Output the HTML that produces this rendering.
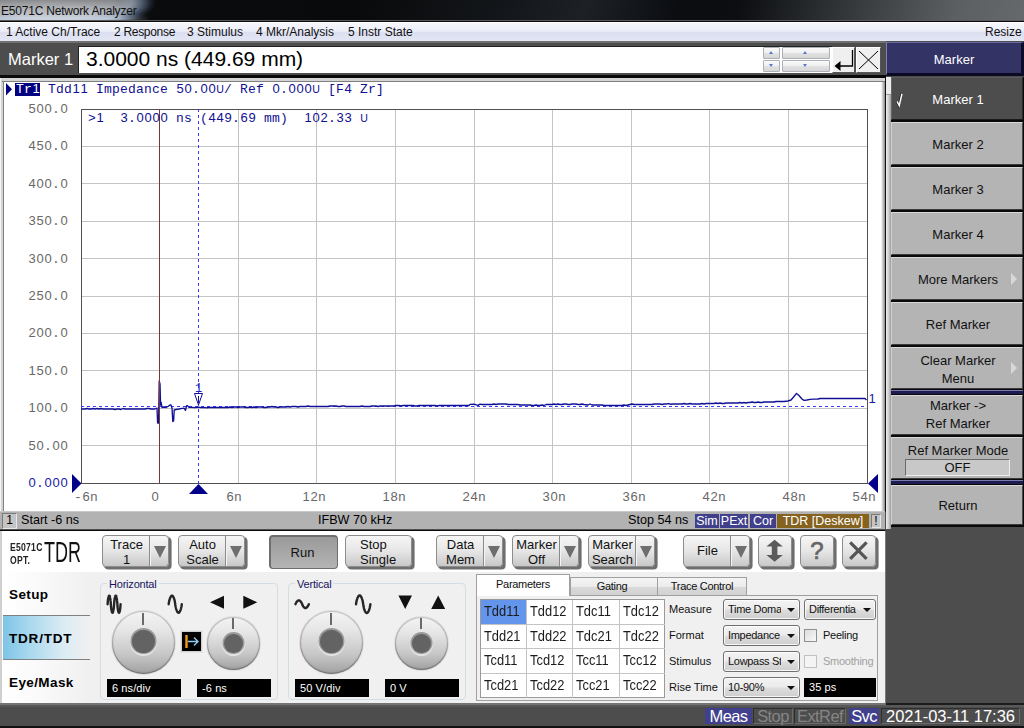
<!DOCTYPE html>
<html><head><meta charset="utf-8"><title>E5071C Network Analyzer</title>
<style>
*{box-sizing:border-box;margin:0;padding:0}
html,body{width:1024px;height:728px;overflow:hidden;background:#4d4d4d;font-family:"Liberation Sans",sans-serif;}
.abs,.abs div,.abs span,.abs i,.abs u,.abs b,.abs svg{position:absolute}
#title{left:0;top:0;width:1024px;height:22px;background:linear-gradient(105deg,#0b0c0e 0,#090a0b 35%,#14171b 50%,#1d2126 57%,#0b0d11 66%,#0c0e12 72%,#3a3d40 84%,#5c5f62 93%,#66696c 100%);overflow:hidden;border-bottom:1px solid #0a0a0a}
#title:after{content:"";position:absolute;left:0;top:20px;width:1024px;height:1px;background:#5a5a5a}
#title .glow{left:-50px;top:-30px;width:206px;height:64px;background:radial-gradient(ellipse closest-side at 50% 50%,rgba(200,203,208,1) 0%,rgba(190,194,200,.97) 55%,rgba(175,188,206,.85) 76%,rgba(130,160,200,.45) 88%,rgba(120,150,190,.15) 95%,rgba(120,150,190,0) 100%);}
#title .g2{left:0;top:0;width:150px;height:22px;background:linear-gradient(rgba(90,90,90,.55) 0,rgba(120,120,120,.25) 35%,rgba(255,255,255,0) 60%,rgba(225,238,255,.5) 85%,rgba(225,238,255,.2) 100%);-webkit-mask-image:linear-gradient(90deg,#000 0,#000 80%,transparent 100%)}
#title .txt{left:1px;top:4px;font-size:12px;letter-spacing:-.2px;color:#111;white-space:nowrap}
#menu{left:0;top:22px;width:1024px;height:19px;background:linear-gradient(#f6f7fc 0,#eceef8 45%,#dcdff0 52%,#e3e6f4 100%);border-top:1px solid #fff;font-size:12px;color:#111}
#menu span{top:2px;white-space:nowrap}
#mbar{left:0;top:41px;width:886px;height:37px;background:#4d4d4d;border-top:2px solid #707070;border-bottom:3px solid #0a0a0a}
#mbar .lbl{left:8px;top:7px;color:#fff;font-size:16.5px;white-space:nowrap}
#mbar .entry{left:78px;top:3px;width:754px;height:27px;background:#fff;border-top:1px solid #222;border-left:1px solid #222}
#mbar .val{left:86px;top:4px;font-size:21px;color:#000;white-space:nowrap}
.spin{background:linear-gradient(#fafafa 0,#f0f0f0 45%,#e2e2e2 50%,#d6d6d6 100%);border:1px solid #aeb0b8;border-radius:1px}
.spin i{left:50%;top:50%;margin:-2px 0 0 -3px;width:0;height:0;border-left:2.5px solid transparent;border-right:2.5px solid transparent}
.spin i.u{border-bottom:3px solid #5876d6}
.spin i.d{border-top:3px solid #5876d6}
.mb{background:#efefef;border:1px solid;border-color:#fff #555 #555 #fff}
#stat{font-size:12.6px;color:#000;border-top:1px solid #c8c8c8;border-bottom:1px solid #505050}
#stat span{top:1px;white-space:nowrap}
.sb1{background:#c4c4c4;border:1px solid;border-color:#7a7a7a #e8e8e8 #e8e8e8 #7a7a7a;text-align:center;font-size:12px;line-height:13px;color:#000}
.sbx{top:2px;height:14px;color:#fff;text-align:center;font-size:12.5px;line-height:14px;white-space:nowrap}
.nv{background:#3f3f8c}
.br{background:#86621f}
/* right panel */
#rp{left:886px;top:41px;width:138px;height:687px;background:#4d4d4d}
#rp .hd{left:0;top:1px;width:138px;height:34px;background:#333366;border:1px solid;border-color:#6a6aa0 #0c0c2a #0a0a22 #8080b8;border-bottom-width:3px;border-right-width:3px;color:#fff;text-align:center;font-size:13px;line-height:34px}
.sk{left:5px;width:132px;height:43px;background:#b4b4b4;border:1px solid;border-color:#d8d8d8 #4a4a4a #3a3a3a #d0d0d0;color:#111;text-align:center;font-size:13px;line-height:18px;display:flex;align-items:center;justify-content:center;position:absolute;padding-left:2px;padding-top:2px}
.sk.on{background:#4d4d4d;color:#fff;border-color:#5a5a5a #2a2a2a #1a1a1a #666}
.sk b{position:absolute;right:5px;top:50%;margin-top:-6px;width:0;height:0;border-top:6px solid transparent;border-bottom:6px solid transparent;border-left:6px solid #d8d8d8}
.sep{left:5px;width:132px;height:4px;background:#1c1c50;border-top:1px solid #7a7ab0;position:absolute}
/* TDR panel */
#tdr{left:0;top:0;width:0;height:0;font-size:13px;color:#111}
#tdr .bg{left:0;top:530px;width:886px;height:173px;background:#d0d0d0;border-top:1px solid #0a0a0a;border-right:1px solid #7a7a7a}
#tdr .wh{left:2px;top:531px;width:883px;height:41px;background:#fff}
#tdr .gy{left:2px;top:572px;width:883px;height:131px;background:#f0f0f0}
#tdr .side{left:2px;top:572px;width:88px;height:131px;background:linear-gradient(90deg,#fff 0,#fafafa 40%,#f0f0f0 100%)}
#tdr .sel{left:3px;top:615px;width:87px;height:45px;background:linear-gradient(90deg,#7cc4e6 0,#a8d8ee 30%,#dcecf4 70%,#f0f0f0 100%);border-top:1px solid #808080;border-bottom:1px solid #808080}
#tdr .sl{left:9px;font-weight:bold;font-size:13.5px;letter-spacing:.4px;white-space:nowrap;color:#000}
.tb{height:32px;border:1px solid #8c8c8c;border-radius:4px;background:linear-gradient(#f6f6f6 0,#e6e6e6 50%,#c8c8c8 100%);box-shadow:1px 1px 0 #6e6e6e,2px 2px 0 #6e6e6e,2.6px 2.6px 0 #707070;text-align:center;line-height:14.5px;font-size:13px;padding-top:2px;top:535px;color:#111}
.tb.one{line-height:26px}
.tb .tx{left:0;top:2px;text-align:center}
.tb .dv{top:0;width:2px;height:30px;border-left:1px solid #8a8a8a;border-right:1px solid #f4f4f4}
.tb .ar{top:10px;width:0;height:0;border-left:6px solid transparent;border-right:6px solid transparent;border-top:12.5px solid #6e6e6e}
.tb.dn{background:linear-gradient(#9a9a9a 0,#b4b4b4 100%);border:2px solid #6e6e6e;border-right-width:1px;border-bottom-width:1px;box-shadow:none;height:34px;line-height:27px;padding-right:3px}
.gb{top:583px;height:117px;border:1px solid #d3dde4;border-radius:4px}
.gl{top:576.5px;font-size:11px;letter-spacing:-.2px;color:#151560;background:#f0f0f0;padding:0 2px;white-space:nowrap;line-height:15px}
.kb{border-radius:50%;background:linear-gradient(#f4f4f4 0,#e6e6e6 30%,#c6c6c6 70%,#a0a0a0 100%);box-shadow:inset 0 -1px 1.5px rgba(70,70,70,.55),inset 0 0 0 1px rgba(140,140,140,.45),0 0 0 1px rgba(205,205,205,.55)}
.kb i{border-radius:50%;background:#636363;box-shadow:0 -.5px 0 1.5px #9a9a9a,0 1px 0 2px #e2e2e2}
.kb u{background:#6a6a6a;width:2px;left:50%;margin-left:-1.500px}
.bx{background:#000;color:#fff;font-size:11px;letter-spacing:.1px;line-height:18px;height:18px;padding-left:5px;white-space:nowrap;top:679px}
.tab{border:1px solid #a0a0a0;border-bottom:none;background:linear-gradient(#f4f4f4 0,#ececec 50%,#dadada 51%,#d2d2d2 100%);text-align:center;font-size:11px;letter-spacing:-.3px;line-height:16px;top:577px;height:18px}
.tab.act{background:#fff;top:574px;height:22px;line-height:19px;z-index:2}
.tp{left:476px;top:595px;width:402px;height:106px;border:1px solid #a0a0a0;background:#f0f0f0}
.pt{left:480px;top:599px;width:185px;height:99px;background:#fff;border:1px solid #9a9a9a}
.pt div{width:46px;height:24px;font-size:14px;line-height:22px;padding-left:3px;white-space:nowrap;color:#1c1c1c}
.pt span{display:inline-block;position:static!important;transform:scaleX(.92);transform-origin:0 50%}
.cl{left:669px;font-size:11px;white-space:nowrap;line-height:15px}
.cb{height:21px;border:1px solid #707070;border-radius:3px;background:linear-gradient(#f3f3f3 0,#ebebeb 48%,#dddddd 52%,#cfcfcf 100%);box-shadow:inset 0 0 0 1px rgba(255,255,255,.8);font-size:11px;line-height:19px;padding-left:4px;white-space:nowrap;overflow:hidden;color:#111}
.cb:after{content:"";position:absolute;right:4px;top:8px;border-left:4px solid transparent;border-right:4px solid transparent;border-top:4px solid #111}
.cb span{left:4px;top:0;overflow:hidden;height:19px;letter-spacing:-.3px}
.ck{width:13px;height:13px;border:1px solid #8e8f8f;background:linear-gradient(135deg,#dcdcdc,#f8f8f8)}
#bot{left:0;top:703px;width:1024px;height:25px;background:#4d4d4d;border-top:2px solid #747474;border-bottom:2px solid #111}
#bot .rl{left:886px;top:-2px;width:138px;height:2px;background:#1c1c1c;border:0}
#bot:after{content:"";position:absolute;left:0;top:0;width:1024px;height:2px;background:#585858}
#bot div{top:3px;height:16px;font-size:16.5px;line-height:16px;text-align:center;white-space:nowrap;color:#fff;letter-spacing:-.6px}
#bot .n{background:#40408c}
#bot .o{color:#858585;border:1px solid;border-color:#2e2e2e #6a6a6a #6a6a6a #2e2e2e;line-height:14px}
</style></head><body>
<div id="title" class="abs"><div class="glow"></div><div class="g2"></div><div class="txt">E5071C Network Analyzer</div></div>
<div id="menu" class="abs"><span style="left:6px">1 Active Ch/Trace</span><span style="left:114px;letter-spacing:-.3px">2 Response</span><span style="left:187px">3 Stimulus</span><span style="left:256px">4 Mkr/Analysis</span><span style="left:348px">5 Instr State</span><span style="left:985px">Resize</span></div>
<div id="mbar" class="abs"><div class="lbl">Marker 1</div><div class="entry"></div><div class="val">3.0000 ns (449.69 mm)</div>
<div class="abs spin" style="left:763px;top:4px;width:17px;height:12px"><i class="u"></i></div>
<div class="abs spin" style="left:763px;top:17px;width:17px;height:12px"><i class="d"></i></div>
<div class="abs spin" style="left:782px;top:4px;width:48px;height:12px"><i class="u"></i></div>
<div class="abs spin" style="left:782px;top:17px;width:48px;height:12px"><i class="d"></i></div>
<div class="abs mb" style="left:832px;top:4px;width:23px;height:26px"><svg width="23" height="26" style="left:-1px;top:-1px"><path d="M20.5 3v16H7" fill="none" stroke="#000" stroke-width="1.3"/><path d="M2.5 19l6-5v10z" fill="#000"/></svg></div>
<div class="abs mb" style="left:856px;top:4px;width:25px;height:26px"><svg width="25" height="26" style="left:-1px;top:-1px"><path d="M3 4l19 18M22 4L3 22" fill="none" stroke="#000" stroke-width="1"/></svg></div>
</div>
<div id="graph" class="abs" style="left:0;top:78px;width:886px;height:434px">
<svg width="886" height="434" viewBox="0 78 886 434" shape-rendering="auto" font-family="Liberation Mono, monospace" font-size="13" letter-spacing=".2">
<rect x="0" y="78" width="886" height="434" fill="#fff"/>
<rect x="0" y="78" width="885" height="3" fill="#d4d4d4"/><rect x="0" y="78" width="3" height="434" fill="#d4d4d4"/>
<rect x="2" y="81" width="883" height="1" fill="#808080"/><rect x="3" y="81" width="1" height="431" fill="#808080"/>
<rect x="0" y="78" width="1" height="434" fill="#f4f4f4"/>
<rect x="881" y="82" width="4" height="430" fill="url(#rb)"/><rect x="885" y="78" width="1" height="434" fill="#111"/>
<defs><linearGradient id="rb" x1="0" x2="1" y1="0" y2="0"><stop offset="0" stop-color="#fff"/><stop offset=".4" stop-color="#d0d0d0"/><stop offset="1" stop-color="#8a8a8a"/></linearGradient></defs>
<path d="M6 83v12.5l6-6.25z" fill="#00008b"/>
<rect x="15" y="83" width="25" height="13" fill="#000080"/>
<text y="92.6" fill="#fff" letter-spacing="0" ><tspan x="16.1 24.1">Tr</tspan><tspan x="32.4" font-family="Liberation Sans, sans-serif">1</tspan></text>
<text y="92.6" fill="#101090" letter-spacing="0" ><tspan x="48.1 56.1 64.1">Tdd</tspan><tspan x="72.4 80.4" font-family="Liberation Sans, sans-serif">11</tspan> <tspan x="96.1 104.1 112.1 120.1 128.1 136.1 144.1 152.1 160.1">Impedance</tspan> <tspan x="176.4 184.4" font-family="Liberation Sans, sans-serif">50</tspan><tspan x="192.1">.</tspan><tspan x="200.4 208.4" font-family="Liberation Sans, sans-serif">00</tspan><tspan x="216.2" font-size="10.600" font-family="Liberation Sans, sans-serif">U</tspan><tspan x="224.1">/</tspan> <tspan x="240.1 248.1 256.1">Ref</tspan> <tspan x="272.4" font-family="Liberation Sans, sans-serif">0</tspan><tspan x="280.1">.</tspan><tspan x="288.4 296.4 304.4" font-family="Liberation Sans, sans-serif">000</tspan><tspan x="312.2" font-size="10.600" font-family="Liberation Sans, sans-serif">U</tspan> <tspan x="328.1 336.1">[F</tspan><tspan x="344.4" font-family="Liberation Sans, sans-serif">4</tspan> <tspan x="360.1 368.1 376.1">Zr]</tspan></text>
<path d="M159.5 109V483M238.5 109V483M316.5 109V483M395.5 109V483M474.5 109V483M552.5 109V483M631.5 109V483M709.5 109V483M788.5 109V483M81 146.5H867M81 183.5H867M81 221.5H867M81 258.5H867M81 296.5H867M81 333.5H867M81 370.5H867M81 408.5H867M81 445.5H867" stroke="#c4c4c4" stroke-width="1" fill="none" shape-rendering="crispEdges"/>
<rect x="81.5" y="109.5" width="786" height="374" fill="none" stroke="#505050" stroke-width="1" shape-rendering="crispEdges"/>
<text y="113.0" fill="#686868" letter-spacing="0" ><tspan x="28.4 36.4 44.4" font-family="Liberation Sans, sans-serif">500</tspan><tspan x="52.1">.</tspan><tspan x="60.4" font-family="Liberation Sans, sans-serif">0</tspan></text>
<text y="150.4" fill="#686868" letter-spacing="0" ><tspan x="28.4 36.4 44.4" font-family="Liberation Sans, sans-serif">450</tspan><tspan x="52.1">.</tspan><tspan x="60.4" font-family="Liberation Sans, sans-serif">0</tspan></text>
<text y="187.8" fill="#686868" letter-spacing="0" ><tspan x="28.4 36.4 44.4" font-family="Liberation Sans, sans-serif">400</tspan><tspan x="52.1">.</tspan><tspan x="60.4" font-family="Liberation Sans, sans-serif">0</tspan></text>
<text y="225.2" fill="#686868" letter-spacing="0" ><tspan x="28.4 36.4 44.4" font-family="Liberation Sans, sans-serif">350</tspan><tspan x="52.1">.</tspan><tspan x="60.4" font-family="Liberation Sans, sans-serif">0</tspan></text>
<text y="262.6" fill="#686868" letter-spacing="0" ><tspan x="28.4 36.4 44.4" font-family="Liberation Sans, sans-serif">300</tspan><tspan x="52.1">.</tspan><tspan x="60.4" font-family="Liberation Sans, sans-serif">0</tspan></text>
<text y="300.0" fill="#686868" letter-spacing="0" ><tspan x="28.4 36.4 44.4" font-family="Liberation Sans, sans-serif">250</tspan><tspan x="52.1">.</tspan><tspan x="60.4" font-family="Liberation Sans, sans-serif">0</tspan></text>
<text y="337.4" fill="#686868" letter-spacing="0" ><tspan x="28.4 36.4 44.4" font-family="Liberation Sans, sans-serif">200</tspan><tspan x="52.1">.</tspan><tspan x="60.4" font-family="Liberation Sans, sans-serif">0</tspan></text>
<text y="374.8" fill="#686868" letter-spacing="0" ><tspan x="28.4 36.4 44.4" font-family="Liberation Sans, sans-serif">150</tspan><tspan x="52.1">.</tspan><tspan x="60.4" font-family="Liberation Sans, sans-serif">0</tspan></text>
<text y="412.2" fill="#686868" letter-spacing="0" ><tspan x="28.4 36.4 44.4" font-family="Liberation Sans, sans-serif">100</tspan><tspan x="52.1">.</tspan><tspan x="60.4" font-family="Liberation Sans, sans-serif">0</tspan></text>
<text y="449.6" fill="#686868" letter-spacing="0" ><tspan x="28.4 36.4" font-family="Liberation Sans, sans-serif">50</tspan><tspan x="44.1">.</tspan><tspan x="52.4 60.4" font-family="Liberation Sans, sans-serif">00</tspan></text>
<text y="487.0" fill="#1a1aa0" letter-spacing="0" ><tspan x="28.4" font-family="Liberation Sans, sans-serif">0</tspan><tspan x="36.1">.</tspan><tspan x="44.4 52.4 60.4" font-family="Liberation Sans, sans-serif">000</tspan></text>
<text y="501" fill="#686868" letter-spacing="0" ><tspan x="74.1">-</tspan><tspan x="82.4" font-family="Liberation Sans, sans-serif">6</tspan><tspan x="90.1">n</tspan></text>
<text y="501" fill="#686868" letter-spacing="0" ><tspan x="151.4" font-family="Liberation Sans, sans-serif">0</tspan></text>
<text y="501" fill="#686868" letter-spacing="0" ><tspan x="226.4" font-family="Liberation Sans, sans-serif">6</tspan><tspan x="234.1">n</tspan></text>
<text y="501" fill="#686868" letter-spacing="0" ><tspan x="302.4 310.4" font-family="Liberation Sans, sans-serif">12</tspan><tspan x="318.1">n</tspan></text>
<text y="501" fill="#686868" letter-spacing="0" ><tspan x="382.4 390.4" font-family="Liberation Sans, sans-serif">18</tspan><tspan x="398.1">n</tspan></text>
<text y="501" fill="#686868" letter-spacing="0" ><tspan x="462.4 470.4" font-family="Liberation Sans, sans-serif">24</tspan><tspan x="478.1">n</tspan></text>
<text y="501" fill="#686868" letter-spacing="0" ><tspan x="542.4 550.4" font-family="Liberation Sans, sans-serif">30</tspan><tspan x="558.1">n</tspan></text>
<text y="501" fill="#686868" letter-spacing="0" ><tspan x="622.4 630.4" font-family="Liberation Sans, sans-serif">36</tspan><tspan x="638.1">n</tspan></text>
<text y="501" fill="#686868" letter-spacing="0" ><tspan x="702.4 710.4" font-family="Liberation Sans, sans-serif">42</tspan><tspan x="718.1">n</tspan></text>
<text y="501" fill="#686868" letter-spacing="0" ><tspan x="782.4 790.4" font-family="Liberation Sans, sans-serif">48</tspan><tspan x="798.1">n</tspan></text>
<text y="501" fill="#686868" letter-spacing="0" ><tspan x="852.4 860.4" font-family="Liberation Sans, sans-serif">54</tspan><tspan x="868.1">n</tspan></text>
<path d="M198.5 109V484" stroke="#3a3aff" stroke-width="1" stroke-dasharray="3 3" shape-rendering="crispEdges"/>
<path d="M81 406.5H867" stroke="#3a3aff" stroke-width="1" stroke-dasharray="3 3" shape-rendering="crispEdges"/>
<path d="M81.0 409.0 83.0 409.0 85.0 409.0 87.0 408.5 89.0 409.0 91.0 409.0 93.0 408.5 95.0 409.0 97.0 408.5 99.0 409.0 101.0 408.5 103.0 409.0 105.0 409.0 107.0 409.0 109.0 409.0 111.0 409.0 113.0 409.0 115.0 409.5 117.0 409.0 119.0 409.0 121.0 409.5 123.0 408.5 125.0 409.0 127.0 409.0 129.0 409.0 131.0 409.0 133.0 409.0 135.0 409.0 137.0 409.0 139.0 409.0 141.0 409.0 143.0 409.0 145.0 409.0 147.0 408.5 149.0 408.5 151.0 409.0 153.0 409.0 155.0 409.0 157.0 408.0 157.6 423.0 158.6 423.0 159.2 381.0 160.0 384.0 160.6 405.0 161.2 402.5 162.0 407.5 164.0 407.0 166.0 407.5 168.0 406.5 170.0 405.0 171.0 405.0 172.0 408.0 172.8 421.5 173.6 421.0 174.2 410.0 176.0 409.5 179.0 409.0 182.0 408.4 184.0 408.2 185.5 410.4 186.5 406.0 187.5 405.6 189.0 407.4 192.0 407.4 195.0 407.6 198.5 407.2 201.0 407.6 204.0 407.4 207.0 407.8 208.0 407.5 210.0 407.5 212.0 407.5 214.0 407.5 216.0 407.5 218.0 407.5 220.0 407.5 222.0 407.5 224.0 407.5 226.0 407.5 228.0 407.5 230.0 407.0 232.0 407.5 234.0 407.0 236.0 407.0 238.0 407.5 240.0 407.0 242.0 407.0 244.0 407.0 246.0 407.5 248.0 407.5 250.0 407.0 252.0 407.5 254.0 407.0 256.0 407.5 258.0 407.0 260.0 407.0 262.0 407.0 264.0 407.5 266.0 407.5 268.0 407.0 270.0 407.0 272.0 406.5 274.0 407.0 276.0 407.0 278.0 407.5 280.0 407.0 282.0 407.0 284.0 407.0 286.0 407.0 288.0 406.5 290.0 407.0 292.0 406.5 294.0 406.5 296.0 406.5 298.0 407.0 300.0 406.5 302.0 406.5 304.0 406.5 306.0 406.5 308.0 406.0 310.0 406.5 312.0 406.5 314.0 406.5 316.0 406.5 318.0 406.5 320.0 406.5 322.0 406.5 324.0 406.5 326.0 406.5 328.0 406.5 330.0 406.0 332.0 406.0 334.0 406.0 336.0 406.0 338.0 406.5 340.0 406.5 342.0 406.0 344.0 406.0 346.0 406.5 348.0 406.5 350.0 406.5 352.0 406.5 354.0 406.5 356.0 406.5 358.0 406.5 360.0 406.5 362.0 406.0 364.0 406.5 366.0 406.5 368.0 406.5 370.0 406.5 372.0 406.0 374.0 406.0 376.0 406.0 378.0 406.5 380.0 406.0 382.0 406.0 384.0 406.0 386.0 406.0 388.0 406.0 390.0 406.0 392.0 406.0 394.0 406.0 395.0 405.5 397.0 405.5 399.0 405.5 401.0 406.0 403.0 405.5 405.0 405.5 407.0 405.5 409.0 405.5 411.0 405.5 413.0 405.5 415.0 406.0 417.0 406.0 419.0 405.5 421.0 405.5 423.0 405.5 425.0 405.5 427.0 405.5 429.0 405.5 431.0 405.5 433.0 405.5 435.0 405.5 437.0 406.0 439.0 405.5 441.0 405.5 443.0 405.5 445.0 405.5 447.0 405.5 449.0 405.5 451.0 405.5 453.0 405.5 455.0 405.5 457.0 405.5 459.0 405.5 461.0 405.5 463.0 405.5 465.0 405.5 467.0 405.5 469.0 405.5 470.0 404.4 474.0 404.2 478.0 405.4 480.0 404.2 482.0 404.5 484.0 404.5 486.0 404.5 488.0 404.5 490.0 404.5 492.0 404.5 494.0 404.0 496.0 404.5 498.0 404.0 500.0 404.0 502.0 404.0 504.0 404.0 506.0 404.0 508.0 404.5 510.0 404.5 512.0 404.5 514.0 404.5 516.0 404.5 518.0 404.5 520.0 405.0 522.0 405.0 524.0 405.0 526.0 405.0 528.0 405.0 530.0 405.0 532.0 405.5 534.0 405.5 536.0 405.0 538.0 405.5 540.0 405.5 542.0 405.0 544.0 405.5 546.0 404.5 548.0 404.5 550.0 404.5 552.0 404.5 554.0 404.0 556.0 404.5 558.0 404.0 560.0 404.5 562.0 404.5 564.0 404.0 566.0 404.0 568.0 404.5 570.0 404.5 572.0 404.0 574.0 404.0 576.0 404.0 578.0 404.5 580.0 404.5 582.0 404.0 584.0 404.5 588.0 405.0 590.0 404.0 592.0 405.0 594.0 405.0 596.0 405.0 598.0 405.0 600.0 405.0 602.0 405.0 604.0 405.5 606.0 405.5 608.0 405.5 610.0 405.5 612.0 405.5 614.0 405.5 616.0 405.5 618.0 405.5 620.0 405.5 622.0 405.5 624.0 405.0 626.0 405.5 628.0 405.0 630.0 404.5 632.0 404.0 634.0 404.5 636.0 404.5 638.0 404.5 640.0 404.5 642.0 404.5 644.0 404.5 646.0 404.5 648.0 404.5 650.0 404.5 652.0 404.5 654.0 404.0 656.0 404.0 658.0 404.0 660.0 404.0 662.0 404.5 664.0 404.0 666.0 404.0 669.0 403.6 671.0 404.4 672.0 404.0 674.0 404.0 676.0 404.0 678.0 404.0 680.0 404.0 682.0 404.0 684.0 403.5 686.0 404.0 688.0 404.0 690.0 403.5 692.0 404.0 694.0 404.0 696.0 404.0 698.0 404.0 700.0 404.0 702.0 403.5 704.0 404.0 706.0 403.5 708.0 403.5 710.0 403.5 712.0 403.5 714.0 403.5 716.0 403.0 718.0 403.5 720.0 403.0 722.0 403.5 724.0 403.5 726.0 403.0 728.0 403.0 730.0 403.0 732.0 403.0 734.0 403.0 736.0 403.0 738.0 403.0 740.0 402.5 742.0 403.0 744.0 402.5 746.0 403.0 748.0 402.5 750.0 402.5 752.0 402.0 754.0 402.5 756.0 402.5 758.0 402.0 760.0 402.5 762.0 402.5 764.0 402.0 766.0 402.0 768.0 402.0 770.0 402.0 772.0 402.0 774.0 402.0 776.0 401.5 778.0 401.5 780.0 401.5 782.0 401.5 784.0 401.5 788.0 401.0 791.0 400.0 794.0 396.5 796.5 393.4 799.0 395.5 802.0 399.0 804.0 400.4 807.0 400.0 810.0 399.4 814.0 399.2 818.0 399.0 820.0 398.5 823.0 398.5 826.0 398.5 829.0 398.5 832.0 398.5 835.0 398.5 838.0 398.5 841.0 398.5 844.0 398.5 847.0 398.5 850.0 398.5 853.0 398.5 856.0 398.5 859.0 398.5 862.0 398.5 865.0 398.5 866.5 400.0" fill="none" stroke="#101096" stroke-width="1.35" stroke-linejoin="round"/>
<path d="M159.5 109V483" stroke="#7a3535" stroke-width="1" shape-rendering="crispEdges"/>
<path d="M194.5 393.5h8l-4 11.5z" fill="#fff" stroke="#101096" stroke-width="1"/>
<path d="M198.5 396v7" stroke="#101096" stroke-width="1"/>
<text x="198.6" y="391.5" text-anchor="middle" fill="#2020c0" font-size="12">1</text>
<text y="402.5" fill="#1a1aa0" letter-spacing="0" ><tspan x="868.4" font-family="Liberation Sans, sans-serif">1</tspan></text>
<path d="M198.5 484l-9.5 10h19z" fill="#00008b"/>
<path d="M72 474v19l9.5-9.5z" fill="#00008b"/>
<path d="M878 474v19l-10-9.5z" fill="#00008b"/>
<text y="122" fill="#101090" letter-spacing="0" ><tspan x="88.1">&gt;</tspan><tspan x="96.4" font-family="Liberation Sans, sans-serif">1</tspan>  <tspan x="120.4" font-family="Liberation Sans, sans-serif">3</tspan><tspan x="128.1">.</tspan><tspan x="136.4 144.4 152.4 160.4" font-family="Liberation Sans, sans-serif">0000</tspan> <tspan x="176.1 184.1">ns</tspan> <tspan x="200.1">(</tspan><tspan x="208.4 216.4 224.4" font-family="Liberation Sans, sans-serif">449</tspan><tspan x="232.1">.</tspan><tspan x="240.4 248.4" font-family="Liberation Sans, sans-serif">69</tspan> <tspan x="264.1 272.1 280.1">mm)</tspan>  <tspan x="304.4 312.4 320.4" font-family="Liberation Sans, sans-serif">102</tspan><tspan x="328.1">.</tspan><tspan x="336.4 344.4" font-family="Liberation Sans, sans-serif">33</tspan> <tspan x="360.2" font-size="10.600" font-family="Liberation Sans, sans-serif">U</tspan></text>
</svg></div>
<div id="stat" class="abs" style="left:0;top:511px;width:885px;height:19px;background:#b2b2b2">
<div class="sb1" style="left:2px;top:1px;width:15px;height:16px">1</div>
<span style="left:21px">Start -6 ns</span><span style="left:318px">IFBW 70 kHz</span><span style="left:628px">Stop 54 ns</span>
<div class="sbx nv" style="left:695px;width:24px">Sim</div><div class="sbx nv" style="left:720px;width:28px">PExt</div><div class="sbx nv" style="left:750px;width:26px">Cor</div><div class="sbx br" style="left:777px;width:92px">TDR [Deskew]</div><div class="sb1" style="left:871px;top:2px;width:10px;height:14px">!</div>
</div>
<div id="rp" class="abs">
<div class="hd">Marker</div>
<div style="left:5px;top:36px;width:133px;height:450px;background:#0a0a0a"></div>
<div style="left:0;top:36px;width:5px;height:452px;background:linear-gradient(90deg,#f0f0f0,#c8c8c8 60%,#9a9a9a)"></div>
<div style="left:0;top:36px;width:5px;height:18px;background:#ececec;border-bottom:1px solid #999"></div>
<div class="sk on" style="top:36px">Marker 1<svg width="9" height="15" style="position:absolute;left:4px;top:15px"><path d="M.3 8.200l2.300 4.600L5.300.800" fill="none" stroke="#111" stroke-width="1.600"/><path d="M1 8.400l2.200 4.200L5.900.800" fill="none" stroke="#fff" stroke-width="1.500"/></svg></div>
<div class="sk" style="top:81px">Marker 2</div>
<div class="sk" style="top:126px">Marker 3</div>
<div class="sk" style="top:171px">Marker 4</div>
<div class="sk" style="top:216px">More Markers<b></b></div>
<div class="sk" style="top:261px">Ref Marker</div>
<div class="sk" style="top:306px;height:42px;padding-top:4px">Clear Marker<br>Menu<b></b></div>
<div class="sep" style="top:349px"></div>
<div class="sk" style="top:354px;height:40px;padding-top:0">Marker -&gt;<br>Ref Marker</div>
<div class="sk" style="top:396px;height:42px;align-items:flex-start;line-height:21px;padding-top:2px">Ref Marker Mode<div style="position:absolute;left:13px;top:21px;width:105px;height:17px;border:1px solid;border-color:#6a6a6a #eee #eee #6a6a6a;background:#c8c8c8;line-height:15px;font-size:13px">OFF</div></div>
<div class="sep" style="top:439px"></div>
<div class="sk" style="top:444px;height:40px">Return</div>
</div>
<div id="tdr" class="abs">
<div class="bg"></div><div class="wh"></div><div class="gy"></div><div class="side"></div><div class="sel"></div>
<div style="left:10px;top:541px;font-size:10.5px;font-weight:bold;line-height:12.5px;color:#222;transform:scaleX(.82);transform-origin:0 0;white-space:nowrap;letter-spacing:.3px">E5071C<br>OPT.</div>
<div style="left:44px;top:535px;font-size:30px;line-height:34px;color:#111;transform:scaleX(.6);transform-origin:0 0;white-space:nowrap">TDR</div>
<div class="sl" style="top:587px">Setup</div><div class="sl" style="top:630.5px;letter-spacing:.8px">TDR/TDT</div><div class="sl" style="top:675px">Eye/Mask</div>
<!-- toolbar -->
<div class="tb" style="left:102px;width:67px"><div class="tx" style="width:47px">Trace<br>1</div><div class="dv" style="left:46px"></div><div class="ar" style="left:51px"></div></div>
<div class="tb" style="left:178px;width:67px"><div class="tx" style="width:47px">Auto<br>Scale</div><div class="dv" style="left:46px"></div><div class="ar" style="left:51px"></div></div>
<div class="tb dn" style="left:269px;width:69px">Run</div>
<div class="tb" style="left:345px;width:67px"><div class="tx" style="width:65px;text-align:left;padding-left:14px">Stop<br>Single</div></div>
<div class="tb" style="left:436px;width:67px"><div class="tx" style="width:47px">Data<br>Mem</div><div class="dv" style="left:46px"></div><div class="ar" style="left:51px"></div></div>
<div class="tb" style="left:512px;width:67px"><div class="tx" style="width:47px">Marker<br>Off</div><div class="dv" style="left:46px"></div><div class="ar" style="left:51px"></div></div>
<div class="tb" style="left:588px;width:67px"><div class="tx" style="width:47px">Marker<br>Search</div><div class="dv" style="left:46px"></div><div class="ar" style="left:51px"></div></div>
<div class="tb one" style="left:683px;width:67px"><div class="tx" style="width:47px">File</div><div class="dv" style="left:46px"></div><div class="ar" style="left:51px"></div></div>
<div class="tb" style="left:758px;width:34px"><svg width="32" height="30" style="left:0;top:0"><path d="M15.600 3.800l8.200 6.800h-5.400v8.400h5.400l-8.200 6.800-8.200-6.800h5.400v-8.400h-5.400z" fill="#5a5a5a"/></svg></div>
<div class="tb one" style="left:800px;width:34px;font-size:24px;color:#666;line-height:27px;padding-top:1px;-webkit-text-stroke:.7px #666">?</div>
<div class="tb" style="left:842px;width:34px"><svg width="32" height="30" style="left:0;top:0"><path d="M7.200 6.400l16.400 16.400M23.600 6.400L7.200 22.800" stroke="#555" stroke-width="3.200" fill="none"/></svg></div>
<div class="gb" style="left:100px;width:178px"></div>
<div class="gl" style="left:107px">Horizontal</div>
<div class="kb" style="left:112px;top:610.5px;width:63px;height:63px"><i style="left:20px;top:19.500px;width:23px;height:23px"></i><u style="top:2.500px;height:12px"></u></div>
<div class="kb" style="left:207px;top:617px;width:53px;height:53px"><i style="left:17px;top:17px;width:19px;height:19px"></i><u style="top:1px;height:11px"></u></div>
<svg width="180" height="30" style="left:100px;top:590px"><path d="M7.6 14.2L7.8 11.9L7.9 10.4L8.1 9.3L8.2 8.3L8.4 7.5L8.6 6.8L8.7 6.3L8.9 5.9L9.1 5.7L9.2 5.6L9.4 5.7L9.6 5.9L9.7 6.3L9.9 6.8L10.0 7.5L10.2 8.3L10.4 9.3L10.5 10.4L10.7 11.9L10.8 14.2L11.0 16.5L11.2 18.0L11.3 19.1L11.5 20.1L11.7 20.9L11.8 21.6L12.0 22.1L12.2 22.5L12.3 22.7L12.5 22.8L12.6 22.7L12.8 22.5L13.0 22.1L13.1 21.6L13.3 20.9L13.4 20.1L13.6 19.1L13.8 18.0L13.9 16.5L14.1 14.2L14.3 11.9L14.4 10.4L14.6 9.3L14.8 8.3L14.9 7.5L15.1 6.8L15.2 6.3L15.4 5.9L15.6 5.7L15.7 5.6L15.9 5.7L16.1 5.9L16.2 6.3L16.4 6.8L16.5 7.5L16.7 8.3L16.9 9.3L17.0 10.4L17.2 11.9L17.4 14.2L17.5 16.5L17.7 18.0L17.8 19.1L18.0 20.1L18.2 20.9L18.3 21.6L18.5 22.1L18.6 22.5L18.8 22.7L19.0 22.8L19.1 22.7L19.3 22.5L19.5 22.1L19.6 21.6L19.8 20.9L20.0 20.1L20.1 19.1L20.3 18.0L20.4 16.5L20.6 14.2" fill="none" stroke="#262626" stroke-width="2.400" stroke-linecap="round" stroke-linejoin="round"/><path d="M68.7 14.2L69.0 11.9L69.4 10.4L69.7 9.3L70.0 8.3L70.3 7.5L70.7 6.8L71.0 6.3L71.3 5.9L71.6 5.7L72.0 5.6L72.3 5.7L72.6 5.9L73.0 6.3L73.3 6.8L73.6 7.5L73.9 8.3L74.3 9.3L74.6 10.4L74.9 11.9L75.2 14.2L75.6 16.5L75.9 18.0L76.2 19.1L76.6 20.1L76.9 20.9L77.2 21.6L77.5 22.1L77.9 22.5L78.2 22.7L78.5 22.8L78.9 22.7L79.2 22.5L79.5 22.1L79.8 21.6L80.2 20.9L80.5 20.1L80.8 19.1L81.1 18.0L81.5 16.5L81.8 14.2" fill="none" stroke="#262626" stroke-width="2.400" stroke-linecap="round" stroke-linejoin="round"/><path d="M110 12.300l14-6.500v13zM157.300 12.300l-14-6.500v13z" fill="#111"/></svg><div style="left:181px;top:631px;width:21px;height:21px;background:#000;border:1px solid #d0d0d0;box-shadow:0 0 0 1px #e4e4e4"><svg width="19" height="19" style="left:0;top:0"><path d="M4.500 3v13" stroke="#f39a1e" stroke-width="2.400"/><path d="M6 9.500h10M12 5.500l4 4-4 4" stroke="#8fcaf2" stroke-width="1.400" fill="none"/></svg></div><div class="bx" style="left:107px;width:74px">6 ns/div</div><div class="bx" style="left:197px;width:74px">-6 ns</div>
<div class="gb" style="left:288px;width:178px"></div>
<div class="gl" style="left:295px">Vertical</div>
<div class="kb" style="left:300px;top:610.5px;width:63px;height:63px"><i style="left:20px;top:19.500px;width:23px;height:23px"></i><u style="top:2.500px;height:12px"></u></div>
<div class="kb" style="left:395px;top:617px;width:53px;height:53px"><i style="left:17px;top:17px;width:19px;height:19px"></i><u style="top:1px;height:11px"></u></div>
<svg width="180" height="30" style="left:288px;top:590px"><path d="M7.5 14.2L7.8 13.3L8.2 12.7L8.5 12.2L8.8 11.7L9.2 11.3L9.5 11.0L9.8 10.7L10.2 10.5L10.5 10.4L10.8 10.4L11.2 10.4L11.5 10.5L11.8 10.7L12.2 11.0L12.5 11.3L12.8 11.7L13.2 12.2L13.5 12.7L13.8 13.3L14.2 14.2L14.5 15.1L14.8 15.7L15.1 16.2L15.5 16.7L15.8 17.1L16.1 17.4L16.5 17.7L16.8 17.9L17.1 18.0L17.5 18.0L17.8 18.0L18.1 17.9L18.5 17.7L18.8 17.4L19.1 17.1L19.5 16.7L19.8 16.2L20.1 15.7L20.5 15.1L20.8 14.2" fill="none" stroke="#262626" stroke-width="2.400" stroke-linecap="round" stroke-linejoin="round"/><path d="M68.0 14.2L68.4 11.8L68.7 10.3L69.1 9.1L69.4 8.1L69.8 7.3L70.2 6.6L70.5 6.1L70.9 5.7L71.2 5.5L71.6 5.4L72.0 5.5L72.3 5.7L72.7 6.1L73.0 6.6L73.4 7.3L73.8 8.1L74.1 9.1L74.5 10.3L74.8 11.8L75.2 14.2L75.6 16.6L75.9 18.1L76.3 19.3L76.6 20.3L77.0 21.1L77.4 21.8L77.7 22.3L78.1 22.7L78.4 22.9L78.8 23.0L79.2 22.9L79.5 22.7L79.9 22.3L80.2 21.8L80.6 21.1L81.0 20.3L81.3 19.3L81.7 18.1L82.0 16.6L82.4 14.2" fill="none" stroke="#262626" stroke-width="2.400" stroke-linecap="round" stroke-linejoin="round"/><path d="M110.400 5.500h13.600l-6.800 13.500zM143.200 19h14l-7-13.500z" fill="#111"/></svg><div class="bx" style="left:295px;width:74px">50 V/div</div><div class="bx" style="left:385px;width:74px">0 V</div>
<div class="tab" style="left:570px;width:88px;padding-right:4px">Gating</div><div class="tab" style="left:657px;width:90px">Trace Control</div>
<div class="tp"></div>
<div class="tab act" style="left:476px;width:94px">Parameters</div>
<div class="pt">
<div style="left:0px;top:0px;width:46px;height:25px;border-right:1px solid #c4c4c4;border-bottom:1px solid #c4c4c4;background:#6495ed;"><span>Tdd11</span></div>
<div style="left:46px;top:0px;width:46px;height:25px;border-right:1px solid #c4c4c4;border-bottom:1px solid #c4c4c4;"><span>Tdd12</span></div>
<div style="left:92px;top:0px;width:47px;height:25px;border-right:1px solid #c4c4c4;border-bottom:1px solid #c4c4c4;"><span>Tdc11</span></div>
<div style="left:139px;top:0px;width:45px;height:25px;border-bottom:1px solid #c4c4c4;"><span>Tdc12</span></div>
<div style="left:0px;top:25px;width:46px;height:24px;border-right:1px solid #c4c4c4;border-bottom:1px solid #c4c4c4;"><span>Tdd21</span></div>
<div style="left:46px;top:25px;width:46px;height:24px;border-right:1px solid #c4c4c4;border-bottom:1px solid #c4c4c4;"><span>Tdd22</span></div>
<div style="left:92px;top:25px;width:47px;height:24px;border-right:1px solid #c4c4c4;border-bottom:1px solid #c4c4c4;"><span>Tdc21</span></div>
<div style="left:139px;top:25px;width:45px;height:24px;border-bottom:1px solid #c4c4c4;"><span>Tdc22</span></div>
<div style="left:0px;top:49px;width:46px;height:25px;border-right:1px solid #c4c4c4;border-bottom:1px solid #c4c4c4;"><span>Tcd11</span></div>
<div style="left:46px;top:49px;width:46px;height:25px;border-right:1px solid #c4c4c4;border-bottom:1px solid #c4c4c4;"><span>Tcd12</span></div>
<div style="left:92px;top:49px;width:47px;height:25px;border-right:1px solid #c4c4c4;border-bottom:1px solid #c4c4c4;"><span>Tcc11</span></div>
<div style="left:139px;top:49px;width:45px;height:25px;border-bottom:1px solid #c4c4c4;"><span>Tcc12</span></div>
<div style="left:0px;top:74px;width:46px;height:24px;border-right:1px solid #c4c4c4;"><span>Tcd21</span></div>
<div style="left:46px;top:74px;width:46px;height:24px;border-right:1px solid #c4c4c4;"><span>Tcd22</span></div>
<div style="left:92px;top:74px;width:47px;height:24px;border-right:1px solid #c4c4c4;"><span>Tcc21</span></div>
<div style="left:139px;top:74px;width:45px;height:24px;"><span>Tcc22</span></div>
</div>
<div class="cl" style="top:602px">Measure</div>
<div class="cl" style="top:628px">Format</div>
<div class="cl" style="top:654px">Stimulus</div>
<div class="cl" style="top:680px">Rise Time</div>
<div class="cb" style="left:723px;top:599px;width:77px"><span style="width:52.5px">Time Doma</span></div>
<div class="cb" style="left:723px;top:625px;width:77px"><span style="width:52.5px">Impedance</span></div>
<div class="cb" style="left:723px;top:651px;width:77px"><span style="width:52.5px">Lowpass St</span></div>
<div class="cb" style="left:723px;top:677px;width:77px"><span style="width:52.5px">10-90%</span></div>
<div class="cb" style="left:804px;top:599px;width:72px"><span style="width:48px">Differentia</span></div>
<div class="ck" style="left:804px;top:629px"></div><div class="cl" style="left:823px;top:628px;letter-spacing:-.25px">Peeling</div>
<div class="ck" style="left:804px;top:655px;border-color:#c0c0c0;background:#f4f4f4"></div><div class="cl" style="left:823px;top:654px;color:#a0a0a0;letter-spacing:-.25px">Smoothing</div>
<div class="bx" style="left:804px;top:678px;width:72px;height:19px;line-height:19px">35 ps</div>
</div>
<div id="bot" class="abs"><div class="rl"></div><div class="n" style="left:705px;width:47px">Meas</div><div class="o" style="left:753px;width:40px">Stop</div><div class="o" style="left:794px;width:52px">ExtRef</div><div class="n" style="left:849px;width:30px">Svc</div><div class="o" style="left:881px;width:139px;color:#fff;letter-spacing:0">2021-03-11 17:36</div></div>
</body></html>
